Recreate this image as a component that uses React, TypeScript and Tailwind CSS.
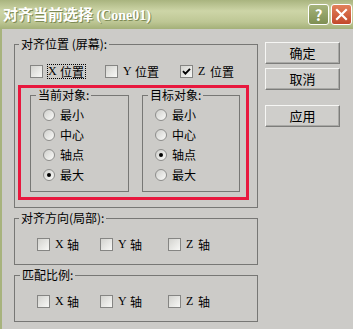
import React from 'react'

const CJK = "font-['Noto_Sans_CJK_SC','Noto_Sans',sans-serif]"
const LAT = "font-['Liberation_Serif',serif]"

function CheckBox({ checked }: { checked?: boolean }) {
  return (
    <span className="flex h-[13px] w-[13px] shrink-0 items-center justify-center border border-[#858583] bg-gradient-to-br from-[#d3d3cf] to-[#f8f8f6]">
      {checked && (
        <svg width="9" height="9" viewBox="0 0 9 9">
          <path d="M1 4.2 L3.4 6.6 L8 1.8" stroke="#000" strokeWidth="1.9" fill="none" />
        </svg>
      )}
    </span>
  )
}

function Radio({ checked }: { checked?: boolean }) {
  return (
    <span className="flex h-[12px] w-[12px] shrink-0 items-center justify-center rounded-full border border-[#8e8e8c] bg-gradient-to-br from-[#cfcfcc] to-[#fbfbf9]">
      {checked && <span className="h-[4px] w-[4px] rounded-full bg-black" />}
    </span>
  )
}

function Group({
  label,
  className = '',
  legendClass = '',
  children,
}: {
  label: string
  className?: string
  legendClass?: string
  children: React.ReactNode
}) {
  return (
    <fieldset className={`border border-[#777775] ${className}`}>
      <legend className={`px-[2px] text-[12px] leading-[14px] ${legendClass}`}>{label}</legend>
      {children}
    </fieldset>
  )
}

function AxisItem({ letter, word, width, checked, focus }: { letter: string; word: string; width: string; checked?: boolean; focus?: boolean }) {
  return (
    <div className={`flex h-[16px] items-center ${width}`}>
      <CheckBox checked={checked} />
      <span
        className={`flex h-[15px] items-center text-[12px] leading-[13px] ${
          focus ? 'ml-[4px] border border-dotted border-black pr-[1px]' : 'ml-[5px]'
        }`}
      >
        <span className={`${LAT} inline-block w-[8px]`}>{letter}</span>
        <span className="ml-[4px]">{word}</span>
      </span>
    </div>
  )
}

function RadioList({ checkedIndex }: { checkedIndex: number }) {
  const items = ['最小', '中心', '轴点', '最大']
  return (
    <div className="flex flex-col pl-[12px] pt-[3px] pb-[6px]">
      {items.map((t, i) => (
        <div key={t} className="flex h-[20px] items-center">
          <Radio checked={i === checkedIndex} />
          <span className="ml-[5px] text-[12px] leading-[14px]">{t}</span>
        </div>
      ))}
    </div>
  )
}

function DlgButton({ label, className = '' }: { label: string; className?: string }) {
  return (
    <button className={`flex h-[22px] w-[75px] items-center justify-center border border-t-[#f6f6f4] border-l-[#f6f6f4] border-r-[#7d7d7b] border-b-[#7d7d7b] bg-[#cfcecb] text-[13px] leading-[14px] shadow-[inset_-1px_-1px_0_#a9a9a6] ${className}`}>
      {label}
    </button>
  )
}

export default function App() {
  return (
    <div className={`h-[329px] w-[353px] overflow-hidden bg-[#cccbc8] text-black ${CJK}`}>
      {/* title bar */}
      <div className="flex h-[29px] items-center bg-[linear-gradient(180deg,#a9b47f_0%,#cdd5a7_38%,#bec795_75%,#a4b079_100%)] pl-[3px] pr-[1px]">
        <div className="flex-1 text-[15px] font-bold leading-[16px] text-white [text-shadow:1px_1px_0_#7d8a55]">
          对齐当前选择 <span className={`${LAT} text-[14px]`}>(Cone01)</span>
        </div>
        <div className="flex h-[21px] w-[21px] items-center justify-center rounded-[3px] border border-white bg-gradient-to-b from-[#a6b47c] to-[#7f8f52] text-[15px] font-bold leading-none text-white">
          ?
        </div>
        <div className="ml-[2px] flex h-[21px] w-[21px] items-center justify-center rounded-[3px] border border-white bg-gradient-to-b from-[#e2805a] to-[#c2482a]">
          <svg width="13" height="13" viewBox="0 0 13 13">
            <path d="M2 2 L11 11 M11 2 L2 11" stroke="#fff" strokeWidth="2.2" strokeLinecap="square" />
          </svg>
        </div>
      </div>

      {/* body */}
      <div className="flex h-[300px] border-l-2 border-[#a7b37d]">
        <div className="w-[256px] shrink-0 pl-[12px] pt-[8px]">
          <Group label="对齐位置 (屏幕):" className="w-[244px] pb-[7px]" legendClass="ml-[4px]">
            <div className="mt-[12px] flex pl-[15px]">
              <AxisItem letter="X" word="位置" width="w-[75px]" focus />
              <AxisItem letter="Y" word="位置" width="w-[75px]" />
              <AxisItem letter="Z" word="位置" width="w-[75px]" checked />
            </div>
            <div className="ml-[3px] mt-[6px] flex h-[115px] w-[231px] items-start border-[3px] border-[#e8183e] pl-[9px]">
              <Group label="当前对象:" className="w-[99px]" legendClass="ml-[5px]">
                <RadioList checkedIndex={3} />
              </Group>
              <Group label="目标对象:" className="ml-[13px] w-[98px]" legendClass="ml-[5px]">
                <RadioList checkedIndex={2} />
              </Group>
            </div>
          </Group>

          <Group label="对齐方向(局部):" className="mt-[3px] w-[244px] pb-[12px]" legendClass="ml-[4px]">
            <div className="mt-[11px] flex pl-[22px]">
              <AxisItem letter="X" word="轴" width="w-[63px]" />
              <AxisItem letter="Y" word="轴" width="w-[68px]" />
              <AxisItem letter="Z" word="轴" width="w-[70px]" />
            </div>
          </Group>

          <Group label="匹配比例:" className="mt-[3px] w-[244px] pb-[12px]" legendClass="ml-[5px]">
            <div className="mt-[11px] flex pl-[22px]">
              <AxisItem letter="X" word="轴" width="w-[63px]" />
              <AxisItem letter="Y" word="轴" width="w-[68px]" />
              <AxisItem letter="Z" word="轴" width="w-[70px]" />
            </div>
          </Group>
        </div>

        <div className="ml-[7px] flex flex-col pt-[13px]">
          <DlgButton label="确定" />
          <DlgButton label="取消" className="mt-[4px]" />
          <DlgButton label="应用" className="mt-[15px]" />
        </div>
      </div>
    </div>
  )
}
